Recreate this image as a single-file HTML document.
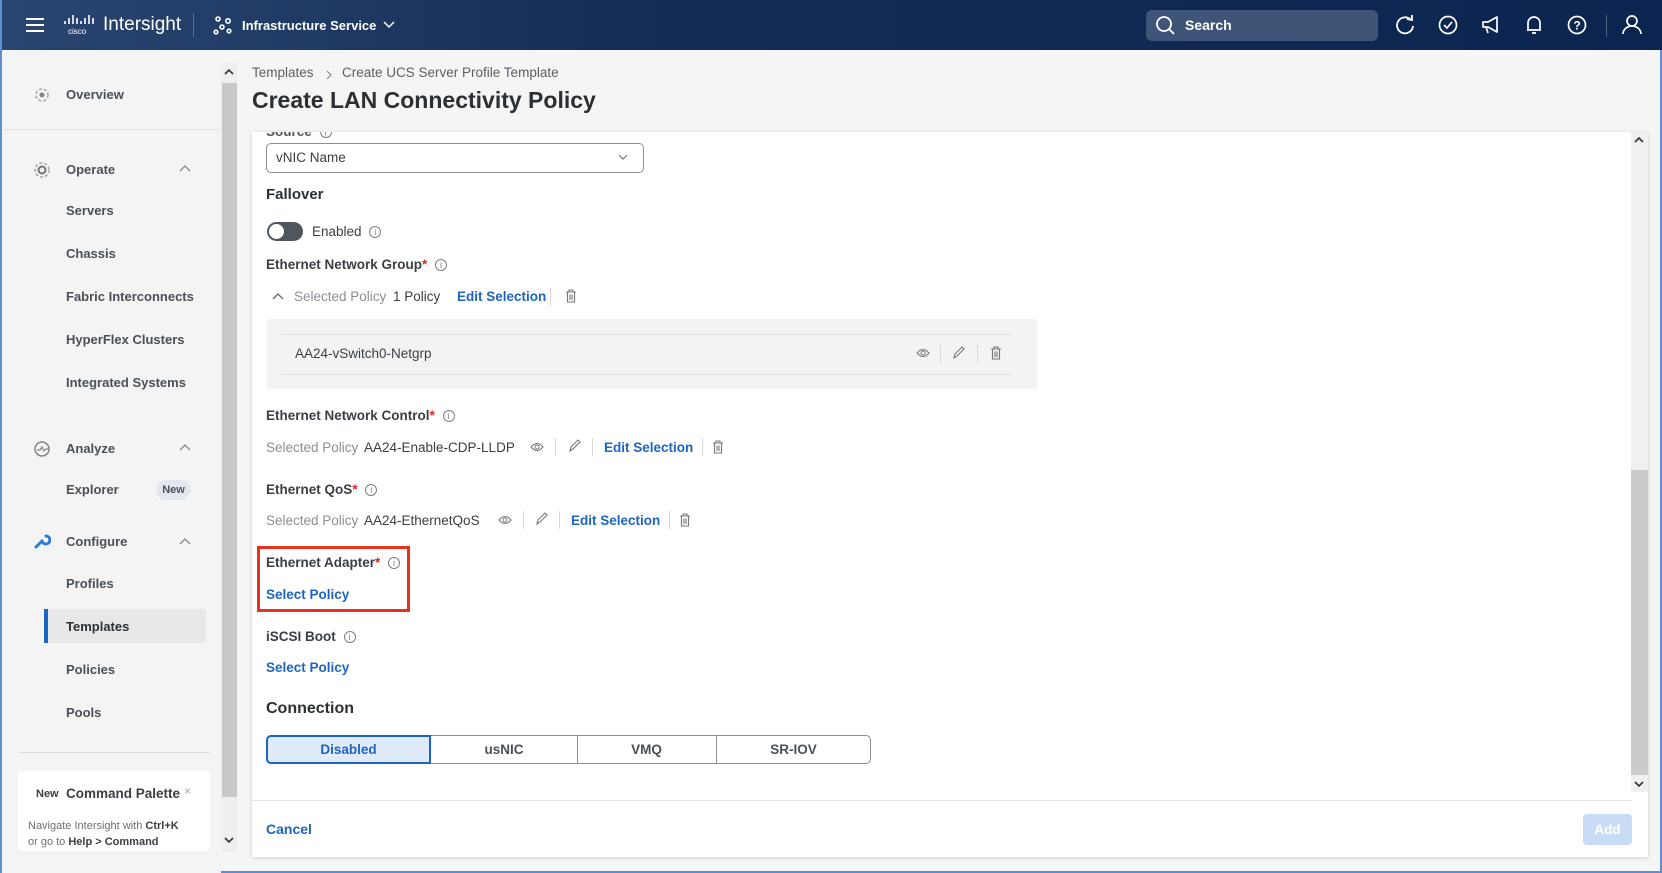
<!DOCTYPE html>
<html><head><meta charset="utf-8"><style>
*{box-sizing:border-box;margin:0;padding:0}
body{width:1662px;height:873px;overflow:hidden;background:#f5f5f5;font-family:"Liberation Sans",sans-serif;color:#2b3035;position:relative;border:2px solid #5b8fd0;border-top:none}
.a{position:absolute;white-space:nowrap}
.hdr{position:absolute;left:0;top:0;width:1662px;height:50px;background:linear-gradient(90deg,#2a4670,#132c55 40%,#0c2550)}
.w{color:#fff}
.nav{font-size:13px;font-weight:bold;color:#4a5058}
.lbl{font-size:13.5px;font-weight:bold;color:#3a3f45}
.lbl .r{color:#e2231a}
.g{font-size:13.5px;color:#8a8f95}
.v{font-size:13.5px;color:#3a3f45}
.lk{font-size:13.5px;font-weight:bold;color:#1d64c4}
.dv{position:absolute;width:1px;height:18px;background:#d6d8da}
.inf{display:inline-block;width:12px;height:12px;border:1px solid #7a7f85;border-radius:50%;font-size:9px;line-height:10px;text-align:center;color:#7a7f85;font-weight:normal;vertical-align:1px;margin-left:4px}
</style></head><body>
<div class="hdr"></div>
<!-- header -->
<svg class="a" style="left:23px;top:16px" width="20" height="18"><g stroke="#fff" stroke-width="2"><line x1="1" y1="3" x2="19" y2="3"/><line x1="1" y1="9" x2="19" y2="9"/><line x1="1" y1="15" x2="19" y2="15"/></g></svg>
<svg class="a" style="left:61px;top:14px" width="34" height="22"><g stroke="#fff" stroke-width="1.6"><line x1="2" y1="7" x2="2" y2="10"/><line x1="6" y1="4" x2="6" y2="10"/><line x1="10" y1="1" x2="10" y2="10"/><line x1="14" y1="4" x2="14" y2="10"/><line x1="18" y1="7" x2="18" y2="10"/><line x1="22" y1="4" x2="22" y2="10"/><line x1="26" y1="1" x2="26" y2="10"/><line x1="30" y1="4" x2="30" y2="10"/></g><text x="5" y="20" fill="#fff" font-size="8" font-family="Liberation Sans">cisco</text></svg>
<div class="a w" style="left:101px;top:14px;font-size:19px">Intersight</div>
<div class="a" style="left:191px;top:13px;width:1px;height:24px;background:#5a6f90"></div>
<svg class="a" style="left:211px;top:15px" width="20" height="20"><g fill="none" stroke="#fff" stroke-width="1.6"><circle cx="5" cy="4" r="2"/><circle cx="15" cy="6" r="2.2"/><circle cx="9" cy="12" r="2"/><circle cx="3" cy="17" r="1.8"/><circle cx="16" cy="16" r="1.8"/></g></svg>
<div class="a w" style="left:240px;top:18px;font-size:13px;font-weight:bold">Infrastructure Service</div>
<svg class="a" style="left:381px;top:20px" width="12" height="10"><path d="M1 2 L6 7 L11 2" fill="none" stroke="#fff" stroke-width="1.5"/></svg>
<div class="a" style="left:1144px;top:10px;width:232px;height:31px;border-radius:6px;background:#3f5577"></div>
<svg class="a" style="left:1153px;top:15px" width="22" height="22"><circle cx="9" cy="9" r="7" fill="none" stroke="#fff" stroke-width="1.8"/><line x1="14" y1="14" x2="19" y2="19" stroke="#fff" stroke-width="1.8"/></svg>
<div class="a w" style="left:1183px;top:17px;font-size:14px;font-weight:bold">Search</div>
<svg class="a" style="left:1392px;top:14px" width="22" height="22"><path d="M17 6 A8 8 0 1 0 19 12" fill="none" stroke="#fff" stroke-width="1.8"/><path d="M13 5 L18 6 L18 1" fill="none" stroke="#fff" stroke-width="1.8"/></svg>
<svg class="a" style="left:1435px;top:14px" width="22" height="22"><circle cx="11" cy="11" r="8.5" fill="none" stroke="#fff" stroke-width="1.7"/><path d="M7 11 L10 14 L15 8" fill="none" stroke="#fff" stroke-width="1.7"/></svg>
<svg class="a" style="left:1478px;top:14px" width="22" height="22"><path d="M3 8 H8 L17 3 V18 L8 13 H3 Z M6 13 L8 19" fill="none" stroke="#fff" stroke-width="1.7" stroke-linejoin="round"/></svg>
<svg class="a" style="left:1521px;top:13px" width="22" height="24"><path d="M5 17 V10 A6 6 0 0 1 17 10 V17 H4 H18 M9 20 H13" fill="none" stroke="#fff" stroke-width="1.7"/></svg>
<svg class="a" style="left:1564px;top:14px" width="22" height="22"><circle cx="11" cy="11" r="8.5" fill="none" stroke="#fff" stroke-width="1.7"/><text x="7.5" y="15.5" fill="#fff" font-size="12" font-weight="bold" font-family="Liberation Sans">?</text></svg>
<div class="a" style="left:1604px;top:15px;width:1px;height:22px;background:#4a6080"></div>
<svg class="a" style="left:1619px;top:13px" width="22" height="24"><circle cx="11" cy="8" r="5" fill="none" stroke="#fff" stroke-width="1.7"/><path d="M2 21 A9 8 0 0 1 20 21" fill="none" stroke="#fff" stroke-width="1.7"/></svg>

<!-- sidebar -->
<div class="a" style="left:0;top:50px;width:219px;height:823px;background:#f4f4f4"></div>
<div class="a" style="left:2px;top:129px;width:217px;height:1px;background:#e2e2e2"></div>
<svg class="a" style="left:31px;top:86px" width="18" height="18"><circle cx="9" cy="9" r="6" fill="none" stroke="#a0a4a8" stroke-width="1.5" stroke-dasharray="3 2"/><circle cx="9" cy="9" r="2.5" fill="#80868c"/></svg>
<div class="a nav" style="left:64px;top:87px">Overview</div>
<svg class="a" style="left:31px;top:161px" width="18" height="18"><circle cx="9" cy="9" r="7" fill="none" stroke="#a0a4a8" stroke-width="1.5" stroke-dasharray="3 2"/><circle cx="9" cy="9" r="3.5" fill="none" stroke="#70767c" stroke-width="2"/></svg>
<div class="a nav" style="left:64px;top:162px">Operate</div>
<svg class="a" style="left:177px;top:164px" width="12" height="8"><path d="M1 7 L6 2 L11 7" fill="none" stroke="#888" stroke-width="1.3"/></svg>
<div class="a nav" style="left:64px;top:203px">Servers</div>
<div class="a nav" style="left:64px;top:246px">Chassis</div>
<div class="a nav" style="left:64px;top:289px">Fabric Interconnects</div>
<div class="a nav" style="left:64px;top:332px">HyperFlex Clusters</div>
<div class="a nav" style="left:64px;top:375px">Integrated Systems</div>
<svg class="a" style="left:31px;top:440px" width="18" height="18"><circle cx="9" cy="9" r="7" fill="none" stroke="#80868c" stroke-width="1.5"/><path d="M4 10 H7 L9 7 L11 11 L13 9 H15" fill="none" stroke="#80868c" stroke-width="1.2"/></svg>
<div class="a nav" style="left:64px;top:441px">Analyze</div>
<svg class="a" style="left:177px;top:443px" width="12" height="8"><path d="M1 7 L6 2 L11 7" fill="none" stroke="#888" stroke-width="1.3"/></svg>
<div class="a nav" style="left:64px;top:482px">Explorer</div>
<div class="a" style="left:154px;top:480px;width:35px;height:20px;border-radius:10px;background:#e3e8ee;font-size:11px;font-weight:bold;color:#4a5058;text-align:center;line-height:20px">New</div>
<svg class="a" style="left:31px;top:532px" width="18" height="18"><path d="M3 15 L9 9 M9 9 A4 4 0 1 0 13 4" fill="none" stroke="#2a7ad6" stroke-width="3" stroke-linecap="round"/></svg>
<div class="a nav" style="left:64px;top:534px">Configure</div>
<svg class="a" style="left:177px;top:537px" width="12" height="8"><path d="M1 7 L6 2 L11 7" fill="none" stroke="#888" stroke-width="1.3"/></svg>
<div class="a nav" style="left:64px;top:576px">Profiles</div>
<div class="a" style="left:44px;top:609px;width:160px;height:34px;background:#e8e8e8;border-radius:3px"></div>
<div class="a" style="left:42px;top:609px;width:4px;height:34px;background:#1d64c4"></div>
<div class="a nav" style="left:64px;top:619px;color:#2b3035">Templates</div>
<div class="a nav" style="left:64px;top:662px">Policies</div>
<div class="a nav" style="left:64px;top:705px">Pools</div>
<div class="a" style="left:16px;top:752px;width:192px;height:1px;background:#dcdcdc"></div>
<div class="a" style="left:16px;top:771px;width:192px;height:80px;background:#fff;border-radius:4px"></div>
<div class="a" style="left:34px;top:788px;font-size:11px;font-weight:bold;color:#3a3f45">New</div>
<div class="a" style="left:64px;top:786px;font-size:13.5px;font-weight:bold;color:#3a3f45">Command Palette</div>
<div class="a" style="left:182px;top:784px;font-size:12px;color:#aaa">×</div>
<div class="a" style="left:26px;top:818px;font-size:11px;color:#6a7075;line-height:16px">Navigate Intersight with <b style="color:#3a3f45">Ctrl+K</b><br>or go to <b style="color:#3a3f45">Help &gt; Command</b></div>
<!-- sidebar scrollbar -->
<div class="a" style="left:219px;top:62px;width:16px;height:790px;background:#efefef"></div>
<div class="a" style="left:220px;top:83px;width:15px;height:714px;background:#c8c8c8"></div>
<svg class="a" style="left:222px;top:68px" width="10" height="8"><path d="M1 6 L5 2 L9 6" fill="none" stroke="#333" stroke-width="1.6"/></svg>
<svg class="a" style="left:222px;top:836px" width="10" height="8"><path d="M1 2 L5 6 L9 2" fill="none" stroke="#333" stroke-width="1.6"/></svg>

<!-- breadcrumb/title -->
<div class="a" style="left:250px;top:65px;font-size:13.5px;color:#5a6066">Templates</div>
<svg class="a" style="left:323px;top:70px" width="8" height="10"><path d="M2 1 L6 5 L2 9" fill="none" stroke="#888" stroke-width="1.2"/></svg>
<div class="a" style="left:340px;top:65px;font-size:13.5px;color:#5a6066">Create UCS Server Profile Template</div>
<div class="a" style="left:250px;top:87px;font-size:23px;font-weight:bold;color:#2b3035">Create LAN Connectivity Policy</div>

<!-- card -->
<div class="a" style="left:250px;top:132px;width:1396px;height:725px;background:#fff;box-shadow:0 1px 4px rgba(0,0,0,.15);overflow:hidden">
  <div class="a lbl" style="left:14px;top:-8px;color:#555">Source <span class="inf">i</span></div>
</div>
<div class="a" style="left:250px;top:800px;width:1379px;height:1px;background:#e4e4e4"></div>
<div class="a lk" style="left:264px;top:821px;font-size:14px">Cancel</div>
<div class="a" style="left:1581px;top:814px;width:49px;height:31px;border-radius:4px;background:#c9dcf6;color:#fff;font-size:13.5px;font-weight:bold;text-align:center;line-height:31px">Add</div>
<!-- card scrollbar -->
<div class="a" style="left:1629px;top:132px;width:17px;height:660px;background:#f0f0f0"></div>
<div class="a" style="left:1629px;top:470px;width:17px;height:305px;background:#cbcbcb"></div>
<svg class="a" style="left:1632px;top:136px" width="10" height="8"><path d="M1 6 L5 2 L9 6" fill="none" stroke="#333" stroke-width="1.6"/></svg>
<svg class="a" style="left:1632px;top:780px" width="10" height="8"><path d="M1 2 L5 6 L9 2" fill="none" stroke="#333" stroke-width="1.6"/></svg>

<!-- form -->
<div class="a" style="left:264px;top:143px;width:378px;height:30px;border:1px solid #8a8f95;border-radius:5px"></div>
<div class="a v" style="left:274px;top:150px">vNIC Name</div>
<svg class="a" style="left:616px;top:154px" width="10" height="7"><path d="M1 1 L5 5 L9 1" fill="none" stroke="#777" stroke-width="1.2"/></svg>
<div class="a" style="left:264px;top:186px;font-size:15px;font-weight:bold;color:#2b3035">Fallover</div>
<div class="a" style="left:265px;top:222px;width:36px;height:19px;border-radius:10px;background:#4f565e"></div>
<div class="a" style="left:267px;top:224px;width:15px;height:15px;border-radius:50%;background:#fff"></div>
<div class="a v" style="left:310px;top:224px">Enabled <span class="inf">i</span></div>
<div class="a lbl" style="left:264px;top:257px">Ethernet Network Group<span class="r">*</span> <span class="inf">i</span></div>
<svg class="a" style="left:270px;top:292px" width="12" height="8"><path d="M1 7 L6 2 L11 7" fill="none" stroke="#666" stroke-width="1.3"/></svg>
<div class="a g" style="left:292px;top:289px">Selected Policy</div>
<div class="a v" style="left:391px;top:289px">1 Policy</div>
<div class="a lk" style="left:455px;top:289px">Edit Selection</div>
<div class="dv" style="left:548px;top:288px"></div>
<svg class="a" style="left:563px;top:289px" width="12" height="14"><path d="M1 3 H11 M4 3 V1 H8 V3 M2.5 3 V13 H9.5 V3 M5 5.5 V11 M7 5.5 V11" fill="none" stroke="#777" stroke-width="1.1"/></svg>
<div class="a" style="left:265px;top:319px;width:770px;height:70px;background:#f3f3f3"></div>
<div class="a" style="left:279px;top:334px;width:732px;height:1px;background:#e0e0e0"></div>
<div class="a" style="left:279px;top:374px;width:732px;height:1px;background:#e0e0e0"></div>
<div class="a v" style="left:293px;top:346px">AA24-vSwitch0-Netgrp</div>
<svg class="a" style="left:914px;top:348px" width="14" height="10"><path d="M1 5 Q7 -2 13 5 Q7 12 1 5 Z" fill="none" stroke="#777" stroke-width="1.1"/><circle cx="7" cy="5" r="2" fill="none" stroke="#777"/></svg>
<div class="dv" style="left:938px;top:345px"></div>
<svg class="a" style="left:950px;top:346px" width="13" height="14"><path d="M2 12 L3 8 L10 1 L12 3 L5 10 Z" fill="none" stroke="#777" stroke-width="1.1"/></svg>
<div class="dv" style="left:975px;top:345px"></div>
<svg class="a" style="left:988px;top:346px" width="12" height="14"><path d="M1 3 H11 M4 3 V1 H8 V3 M2.5 3 V13 H9.5 V3 M5 5.5 V11 M7 5.5 V11" fill="none" stroke="#777" stroke-width="1.1"/></svg>

<div class="a lbl" style="left:264px;top:408px">Ethernet Network Control<span class="r">*</span> <span class="inf">i</span></div>
<div class="a g" style="left:264px;top:440px">Selected Policy</div>
<div class="a v" style="left:362px;top:440px">AA24-Enable-CDP-LLDP</div>
<svg class="a" style="left:528px;top:442px" width="14" height="10"><path d="M1 5 Q7 -2 13 5 Q7 12 1 5 Z" fill="none" stroke="#777" stroke-width="1.1"/><circle cx="7" cy="5" r="2" fill="none" stroke="#777"/></svg>
<div class="dv" style="left:553px;top:438px"></div>
<svg class="a" style="left:566px;top:439px" width="13" height="14"><path d="M2 12 L3 8 L10 1 L12 3 L5 10 Z" fill="none" stroke="#777" stroke-width="1.1"/></svg>
<div class="dv" style="left:590px;top:438px"></div>
<div class="a lk" style="left:602px;top:440px">Edit Selection</div>
<div class="dv" style="left:700px;top:438px"></div>
<svg class="a" style="left:710px;top:440px" width="12" height="14"><path d="M1 3 H11 M4 3 V1 H8 V3 M2.5 3 V13 H9.5 V3 M5 5.5 V11 M7 5.5 V11" fill="none" stroke="#777" stroke-width="1.1"/></svg>

<div class="a lbl" style="left:264px;top:482px">Ethernet QoS<span class="r">*</span> <span class="inf">i</span></div>
<div class="a g" style="left:264px;top:513px">Selected Policy</div>
<div class="a v" style="left:362px;top:513px">AA24-EthernetQoS</div>
<svg class="a" style="left:496px;top:515px" width="14" height="10"><path d="M1 5 Q7 -2 13 5 Q7 12 1 5 Z" fill="none" stroke="#777" stroke-width="1.1"/><circle cx="7" cy="5" r="2" fill="none" stroke="#777"/></svg>
<div class="dv" style="left:521px;top:511px"></div>
<svg class="a" style="left:533px;top:512px" width="13" height="14"><path d="M2 12 L3 8 L10 1 L12 3 L5 10 Z" fill="none" stroke="#777" stroke-width="1.1"/></svg>
<div class="dv" style="left:557px;top:511px"></div>
<div class="a lk" style="left:569px;top:513px">Edit Selection</div>
<div class="dv" style="left:667px;top:511px"></div>
<svg class="a" style="left:677px;top:513px" width="12" height="14"><path d="M1 3 H11 M4 3 V1 H8 V3 M2.5 3 V13 H9.5 V3 M5 5.5 V11 M7 5.5 V11" fill="none" stroke="#777" stroke-width="1.1"/></svg>

<div class="a" style="left:255px;top:546px;width:153px;height:66px;border:3px solid #e8321f"></div>
<div class="a lbl" style="left:264px;top:555px">Ethernet Adapter<span class="r">*</span> <span class="inf">i</span></div>
<div class="a lk" style="left:264px;top:587px">Select Policy</div>
<div class="a lbl" style="left:264px;top:629px">iSCSI Boot <span class="inf">i</span></div>
<div class="a lk" style="left:264px;top:660px">Select Policy</div>
<div class="a" style="left:264px;top:700px;font-size:16px;font-weight:bold;color:#2b3035">Connection</div>
<div class="a" style="left:264px;top:735px;width:605px;height:29px;border:1px solid #8a8f95;border-radius:5px"></div>
<div class="a" style="left:264px;top:735px;width:165px;height:29px;border:2px solid #1d64c4;border-radius:5px 0 0 5px;background:#dfeafa;color:#1d64c4;font-size:13.5px;font-weight:bold;text-align:center;line-height:25px">Disabled</div>
<div class="a" style="left:575px;top:735px;width:1px;height:29px;background:#8a8f95"></div>
<div class="a" style="left:714px;top:735px;width:1px;height:29px;background:#8a8f95"></div>
<div class="a" style="left:429px;top:742px;width:146px;text-align:center;font-size:13.5px;font-weight:bold;color:#4a5058">usNIC</div>
<div class="a" style="left:575px;top:742px;width:139px;text-align:center;font-size:13.5px;font-weight:bold;color:#4a5058">VMQ</div>
<div class="a" style="left:714px;top:742px;width:155px;text-align:center;font-size:13.5px;font-weight:bold;color:#4a5058">SR-IOV</div>
</body></html>
